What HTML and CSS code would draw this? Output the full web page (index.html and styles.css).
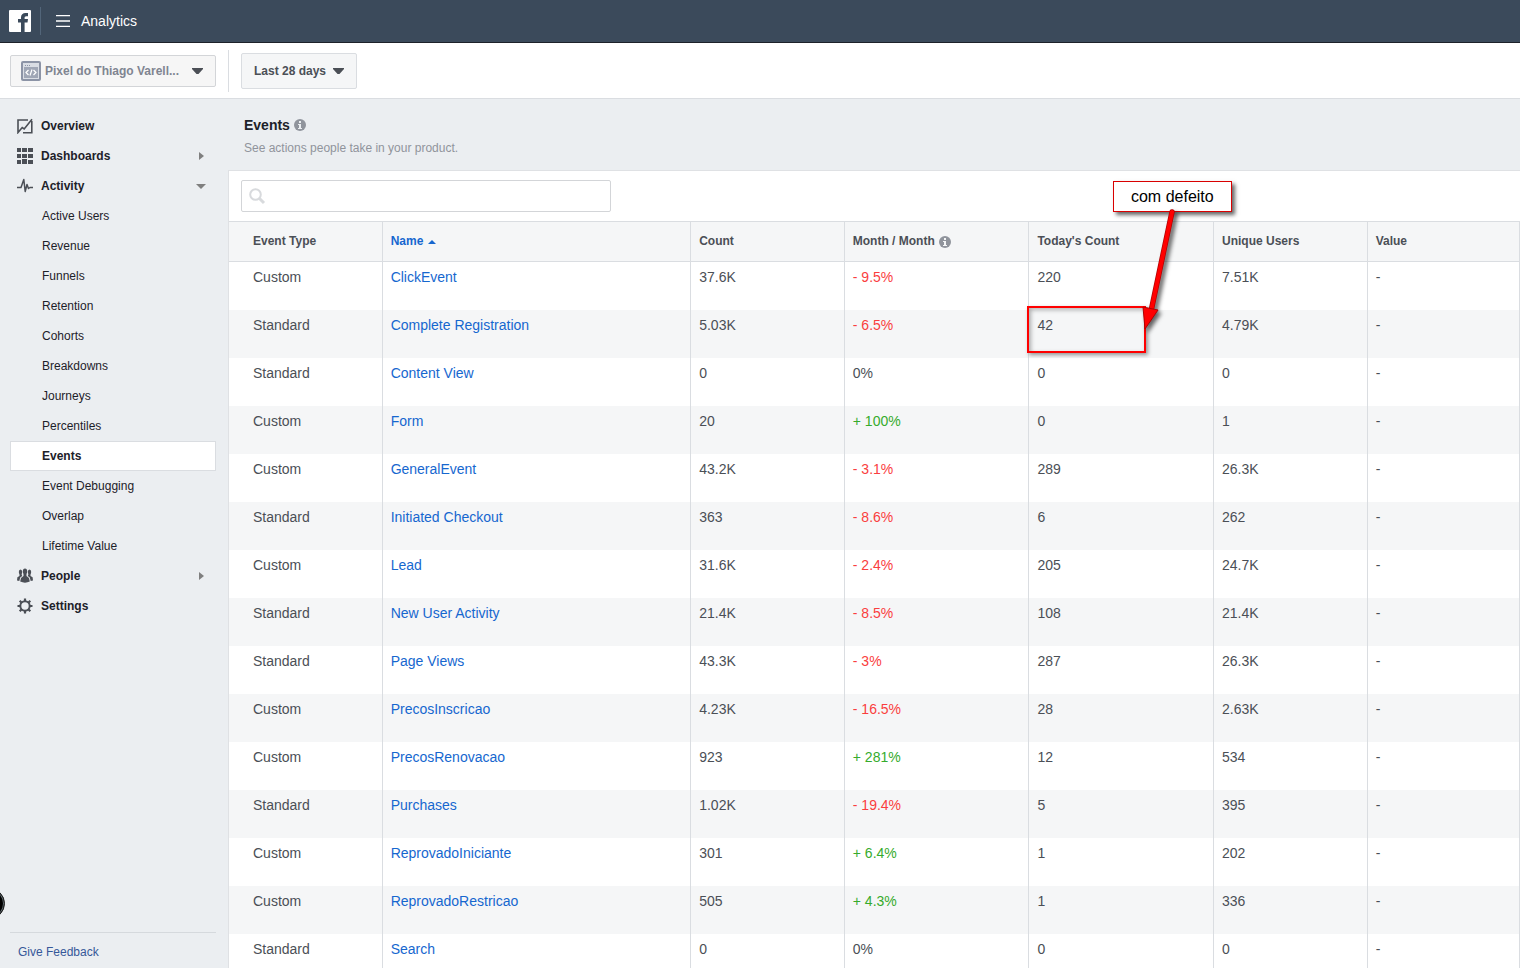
FILE: index.html
```html
<!DOCTYPE html>
<html lang="en">
<head>
    <meta charset="UTF-8">
    <meta name="viewport" content="width=device-width, initial-scale=1.0">
    <title>Analytics - Events</title>
    <link rel="stylesheet" href="styles.css">
</head>
<body>

<header class="topbar">
    <a href="#" class="logo" aria-label="Facebook">
        <svg width="22" height="22" viewBox="0 0 22 22">
            <rect width="22" height="22" rx="1" fill="#fff"/>
            <path d="M12 22v-9.500H9V9h3V7.500C12 4.500 13.800 3 16.500 3H19v3.300h-1.700c-1.400 0-1.700.7-1.700 1.700v1H19l-.5 3.500h-2.900V22z" fill="#3b4a5b"/>
        </svg>
    </a>
    <button class="menu-btn" type="button">
        <svg width="14" height="12" viewBox="0 0 14 12">
            <path d="M0 .5h14M0 6h14M0 11.500h14" stroke="#fff" stroke-width="1.300"/>
        </svg>
        Analytics
    </button>
</header>

<div class="toolbar">
    <div class="toolbar-side">
        <button class="pixel-btn" type="button">
            <svg class="pixel-icon" width="20" height="20" viewBox="0 0 20 20">
                <rect width="20" height="20" rx="2" fill="#8c94a6"/>
                <rect x="2.500" y="2.500" width="15" height="15" fill="#a0a7b6" stroke="#d9dde4"/>
                <path d="M3 3h14v3H3z" fill="#d9dde4"/>
                <path d="M4 4.500h1M6 4.500h1M8 4.500h1" stroke="#8c94a6"/>
                <path d="M7.500 9L5 11.500 7.500 14M12.500 9l2.500 2.500-2.500 2.500M11 8.500l-2 6" fill="none" stroke="#fff" stroke-width="1.200"/>
            </svg>
            <span class="pixel-name">Pixel do Thiago Varell...</span>
            <svg width="11" height="6" viewBox="0 0 11 6"><path d="M0 0h11v1L6.500 6h-2L0 1z" fill="#4b4f56"/></svg>
        </button>
    </div>
    <button class="date-btn" type="button">
        Last 28 days
        <svg width="11" height="6" viewBox="0 0 11 6"><path d="M0 0h11v1L6.500 6h-2L0 1z" fill="#4b4f56"/></svg>
    </button>
</div>

<div class="layout">
    <nav class="sidebar">
        <ul class="nav">
            <li><a href="#" class="nav-main">
                <svg width="16" height="16" viewBox="0 0 16 16"><path d="M11 2H1v12.500L5.200 9.500l2 1.500L15 1.200M14.800 3v11.800H6" fill="none" stroke="#4b4f56" stroke-width="1.600"/></svg>
                Overview</a></li>
            <li><a href="#" class="nav-main">
                <svg width="16" height="16" viewBox="0 0 16 16" fill="#4b4f56"><path d="M0 0h4v4H0zM5 0h5v4H5zM11 0h5v4h-5zM0 6h4v4H0zM5 6h5v4H5zM11 6h5v4h-5zM0 12h4v4H0zM5 11h5v5H5zM11 12h5v4h-5z"/></svg>
                Dashboards
                <span class="arrow-right"></span></a></li>
            <li><a href="#" class="nav-main">
                <svg width="16" height="16" viewBox="0 0 16 16"><path d="M0 9.500h4l2.800-8 1.400 12L10 6.500l1.500 4 1.500-1H16" fill="none" stroke="#4b4f56" stroke-width="1.500" stroke-linejoin="round"/></svg>
                Activity
                <span class="arrow-down"></span></a></li>
            <li><a href="#" class="nav-sub">Active Users</a></li>
            <li><a href="#" class="nav-sub">Revenue</a></li>
            <li><a href="#" class="nav-sub">Funnels</a></li>
            <li><a href="#" class="nav-sub">Retention</a></li>
            <li><a href="#" class="nav-sub">Cohorts</a></li>
            <li><a href="#" class="nav-sub">Breakdowns</a></li>
            <li><a href="#" class="nav-sub">Journeys</a></li>
            <li><a href="#" class="nav-sub">Percentiles</a></li>
            <li><a href="#" class="nav-sub selected">Events</a></li>
            <li><a href="#" class="nav-sub">Event Debugging</a></li>
            <li><a href="#" class="nav-sub">Overlap</a></li>
            <li><a href="#" class="nav-sub">Lifetime Value</a></li>
            <li><a href="#" class="nav-main">
                <svg width="16" height="16" viewBox="0 0 16 16" fill="#4b4f56">
                    <ellipse cx="8" cy="3.500" rx="2.200" ry="3"/>
                    <ellipse cx="3.500" cy="4" rx="1.700" ry="2.500"/>
                    <ellipse cx="12.500" cy="4" rx="1.700" ry="2.500"/>
                    <path d="M6.500 6h3v2l2.500 2 .8 3.500Q8 15.800 3.200 13.500L4 10l2.500-2z"/>
                    <path d="M2.500 6h2l.7 2-2 1.500-.9 3.500L0 12.500l.4-3.300L2.500 8zM13.500 6h-2l-.7 2 2 1.500.9 3.500 2.300-.5-.4-3.300L13.500 8z"/>
                </svg>
                People
                <span class="arrow-right"></span></a></li>
            <li><a href="#" class="nav-main">
                <svg width="16" height="16" viewBox="0 0 16 16" fill="none" stroke="#4b4f56">
                    <circle cx="8" cy="8" r="4.700" stroke-width="2"/>
                    <path d="M8 .5v3M8 12.500v3M.5 8h3M12.500 8h3M2.700 2.700l2 2M11.300 11.300l2 2M13.300 2.700l-2 2M4.700 11.300l-2 2" stroke-width="2.200"/>
                </svg>
                Settings</a></li>
        </ul>
        <div class="feedback"><a href="#">Give Feedback</a></div>
        <span class="edge-bubble"></span>
    </nav>

    <main class="content">
        <div class="page-head">
            <h1>Events
                <svg class="info" width="12" height="12" viewBox="0 0 12 12"><circle cx="6" cy="6" r="6" fill="#90949c"/><path d="M5 2h2v2H5zM4 5h3v4h1v1H4V9h1V6H4z" fill="#ebeef1"/></svg>
            </h1>
            <p>See actions people take in your product.</p>
        </div>

        <section class="panel">
            <div class="search-row">
                <label class="search">
                    <svg width="17" height="17" viewBox="0 0 17 17"><circle cx="6.500" cy="6.500" r="5.300" fill="none" stroke="#d8dadd" stroke-width="2"/><path d="M10.500 10.500l4.500 4.500" stroke="#d8dadd" stroke-width="3"/></svg>
                    <input type="text" aria-label="Search events">
                </label>
            </div>

            <table class="events">
                <colgroup>
                    <col class="col-s"><col class="col-l"><col class="col-s"><col class="col-m"><col class="col-m"><col class="col-s"><col>
                </colgroup>
                <thead>
                    <tr>
                        <th>Event Type</th>
                        <th><button class="sort-btn" type="button">Name <span class="sort-up"></span></button></th>
                        <th>Count</th>
                        <th>Month / Month
                            <svg class="info" width="12" height="12" viewBox="0 0 12 12"><circle cx="6" cy="6" r="6" fill="#90949c"/><path d="M5 2h2v2H5zM4 5h3v4h1v1H4V9h1V6H4z" fill="#f5f6f7"/></svg>
                        </th>
                        <th>Today's Count</th>
                        <th>Unique Users</th>
                        <th>Value</th>
                    </tr>
                </thead>
                <tbody>
                    <tr><td>Custom</td><td><a href="#">ClickEvent</a></td><td>37.6K</td><td class="down">- 9.5%</td><td>220</td><td>7.51K</td><td>-</td></tr>
                    <tr><td>Standard</td><td><a href="#">Complete Registration</a></td><td>5.03K</td><td class="down">- 6.5%</td><td>42</td><td>4.79K</td><td>-</td></tr>
                    <tr><td>Standard</td><td><a href="#">Content View</a></td><td>0</td><td>0%</td><td>0</td><td>0</td><td>-</td></tr>
                    <tr><td>Custom</td><td><a href="#">Form</a></td><td>20</td><td class="up">+ 100%</td><td>0</td><td>1</td><td>-</td></tr>
                    <tr><td>Custom</td><td><a href="#">GeneralEvent</a></td><td>43.2K</td><td class="down">- 3.1%</td><td>289</td><td>26.3K</td><td>-</td></tr>
                    <tr><td>Standard</td><td><a href="#">Initiated Checkout</a></td><td>363</td><td class="down">- 8.6%</td><td>6</td><td>262</td><td>-</td></tr>
                    <tr><td>Custom</td><td><a href="#">Lead</a></td><td>31.6K</td><td class="down">- 2.4%</td><td>205</td><td>24.7K</td><td>-</td></tr>
                    <tr><td>Standard</td><td><a href="#">New User Activity</a></td><td>21.4K</td><td class="down">- 8.5%</td><td>108</td><td>21.4K</td><td>-</td></tr>
                    <tr><td>Standard</td><td><a href="#">Page Views</a></td><td>43.3K</td><td class="down">- 3%</td><td>287</td><td>26.3K</td><td>-</td></tr>
                    <tr><td>Custom</td><td><a href="#">PrecosInscricao</a></td><td>4.23K</td><td class="down">- 16.5%</td><td>28</td><td>2.63K</td><td>-</td></tr>
                    <tr><td>Custom</td><td><a href="#">PrecosRenovacao</a></td><td>923</td><td class="up">+ 281%</td><td>12</td><td>534</td><td>-</td></tr>
                    <tr><td>Standard</td><td><a href="#">Purchases</a></td><td>1.02K</td><td class="down">- 19.4%</td><td>5</td><td>395</td><td>-</td></tr>
                    <tr><td>Custom</td><td><a href="#">ReprovadoIniciante</a></td><td>301</td><td class="up">+ 6.4%</td><td>1</td><td>202</td><td>-</td></tr>
                    <tr><td>Custom</td><td><a href="#">ReprovadoRestricao</a></td><td>505</td><td class="up">+ 4.3%</td><td>1</td><td>336</td><td>-</td></tr>
                    <tr><td>Standard</td><td><a href="#">Search</a></td><td>0</td><td>0%</td><td>0</td><td>0</td><td>-</td></tr>
                </tbody>
            </table>

            <!-- note pinned over the table -->
            <div class="note">
                <div class="note-frame"></div>
                <div class="note-label">com defeito</div>
                <svg class="note-arrow" width="60" height="130" viewBox="0 0 60 130">
                    <path d="M45 4L24.500 101" stroke="#b00000" stroke-width="5.500" stroke-linecap="round"/>
                    <path d="M45 4L24.500 101" stroke="#f00" stroke-width="4" stroke-linecap="round"/>
                    <path d="M16 99l15 3-13 19z" fill="#f00" stroke="#b00000"/>
                </svg>
            </div>
        </section>
    </main>
</div>

</body>
</html>
```
FILE: styles.css
```css
* {
    box-sizing: border-box;
}
body {
    font-family: "Liberation Sans", Arial, sans-serif;
    font-size: 12px;
    color: #1d2129;
    background: #ebeef1;
    margin: 0;
    height: 100vh;
    display: flex;
    flex-direction: column;
    overflow: hidden;
}
a {
    color: inherit;
    text-decoration: none;
}
button {
    font-family: inherit;
    cursor: pointer;
}
svg {
    flex: none;
}

/* top bar */
.topbar {
    display: flex;
    align-items: center;
    flex: none;
    height: 43px;
    padding-left: 9px;
    background: #3b4a5b;
    border-bottom: 1px solid #1d2129;
}
.logo {
    display: flex;
    align-items: center;
    height: 28px;
    padding-right: 9px;
    border-right: 1px solid #526579;
}
.menu-btn {
    display: flex;
    align-items: center;
    gap: 11px;
    padding: 0 15px;
    color: #fff;
    font-size: 14px;
    background: none;
    border: none;
}

/* toolbar */
.toolbar {
    display: flex;
    align-items: center;
    flex: none;
    height: 56px;
    background: #fff;
    border-bottom: 1px solid #dadde1;
}
.toolbar-side {
    display: flex;
    align-items: center;
    width: 229px;
    height: 42px;
    padding: 0 12px 0 10px;
    border-right: 1px solid #dadde1;
}
.pixel-btn, .date-btn {
    display: flex;
    align-items: center;
    font-size: 12px;
    font-weight: bold;
    border-radius: 2px;
}
.pixel-btn {
    width: 100%;
    height: 32px;
    padding: 0 12px 0 10px;
    color: #7f8591;
    background: #f6f6f6;
    border: 1px solid #d3d5d8;
}
.pixel-name {
    flex: 1;
    margin-left: 4px;
    text-align: left;
}
.date-btn {
    gap: 7px;
    height: 36px;
    margin-left: 12px;
    padding: 0 12px;
    color: #4b4f56;
    background: #f5f6f7;
    border: 1px solid #dadde1;
}

/* page layout */
.layout {
    display: flex;
    flex: 1;
    min-height: 0;
}
.sidebar {
    position: relative;
    display: flex;
    flex-direction: column;
    justify-content: space-between;
    flex: none;
    width: 228px;
    padding: 12px 12px 0 10px;
}
.nav {
    list-style: none;
    margin: 0;
    padding: 0;
}
.nav a {
    display: flex;
    align-items: center;
    height: 30px;
    border: 1px solid transparent;
}
.nav .nav-main {
    gap: 8px;
    padding: 0 10px 0 6px;
    font-weight: bold;
}
.nav .nav-sub {
    padding-left: 31px;
}
.nav .selected {
    font-weight: bold;
    background: #fff;
    border-color: #dadde1;
}
.arrow-right, .arrow-down {
    margin-left: auto;
    border: solid transparent;
}
.arrow-right {
    border-width: 4px 0 4px 5px;
    border-left-color: #7f7f7f;
    margin-right: 1px;
}
.arrow-down {
    border-width: 5px 5px 0;
    border-top-color: #7f7f7f;
    margin-right: -1px;
}
.feedback {
    padding: 12px 8px 9px;
    line-height: 14px;
    color: #365899;
    border-top: 1px solid #d5d9dd;
}
.edge-bubble {
    position: absolute;
    left: -26px;
    bottom: 49px;
    width: 31px;
    height: 31px;
    background: #000;
    border: 1px solid #222;
    border-radius: 50%;
    box-shadow: inset 0 0 0 1px #5f6a6f;
}

/* content */
.content {
    display: flex;
    flex-direction: column;
    flex: 1;
    min-width: 0;
}
.page-head {
    flex: none;
    padding: 17px 16px 14px;
}
.page-head h1 {
    display: flex;
    align-items: center;
    gap: 4px;
    margin: 0;
    font-size: 14px;
    line-height: 18px;
}
.page-head p {
    margin: 6px 0 0;
    line-height: 16px;
    color: #90949c;
}
.panel {
    position: relative;
    flex: 1;
    background: #fff;
    border: solid #dfe1e4;
    border-width: 1px 0 0 1px;
}
.search-row {
    padding: 9px 12px;
}
.search {
    display: flex;
    align-items: center;
    width: 370px;
    height: 32px;
    padding-left: 7px;
    border: 1px solid #d3d5d8;
    border-radius: 2px;
}
.search input {
    flex: 1;
    height: 28px;
    font-size: 14px;
    border: none;
    outline: none;
}

/* events table */
.events {
    width: 100%;
    table-layout: fixed;
    border-collapse: separate;
    border-spacing: 0;
}
.col-s {
    width: 11.9%;
}
.col-m {
    width: 14.3%;
}
.col-l {
    width: 23.9%;
}
.events th {
    height: 41px;
    padding: 0 8px 2px;
    font-size: 12px;
    text-align: left;
    color: #4b4f56;
    background: #f5f6f7;
    border: solid #dadde1;
    border-width: 1px 1px 1px 0;
}
.events td {
    height: 48px;
    padding: 6px 8px 0;
    font-size: 14px;
    line-height: 18px;
    vertical-align: top;
    color: #4b4f56;
    border-right: 1px solid #dadde1;
}
.events th:first-child, .events td:first-child {
    padding-left: 24px;
}
.events tbody tr:nth-child(even) {
    background: #f5f6f7;
}
.events td a {
    color: #1667cf;
}
.events .down {
    color: #fa3e3e;
}
.events .up {
    color: #36ab2c;
}
.sort-btn {
    padding: 0;
    font-size: 12px;
    font-weight: bold;
    color: #1667cf;
    background: none;
    border: none;
}
.sort-up {
    display: inline-block;
    margin-left: 1px;
    vertical-align: 1px;
    border: solid transparent;
    border-width: 0 4px 4px;
    border-bottom-color: #1667cf;
}
th .info {
    margin-left: 1px;
    vertical-align: -3px;
}

/* note */
.note {
    position: absolute;
    top: 10px;
    left: 61.8%;
    width: 205px;
    height: 172px;
    pointer-events: none;
}
.note-label {
    position: absolute;
    top: 0;
    right: 0;
    width: 119px;
    height: 31px;
    font-size: 16px;
    line-height: 29px;
    text-align: center;
    color: #000;
    background: #fff;
    border: 1px solid #d90000;
    box-shadow: 3px 3px 4px rgba(0, 0, 0, 0.6);
}
.note-frame {
    position: absolute;
    left: 0;
    bottom: 0;
    width: 119px;
    height: 47px;
    border: 2px solid #f00;
    box-shadow: 2px 2px 4px rgba(0, 0, 0, 0.4), inset 2px 2px 4px rgba(0, 0, 0, 0.3);
}
.note-arrow {
    position: absolute;
    top: 27px;
    left: 100px;
    filter: drop-shadow(3px 3px 2px rgba(0, 0, 0, 0.6));
}
```
